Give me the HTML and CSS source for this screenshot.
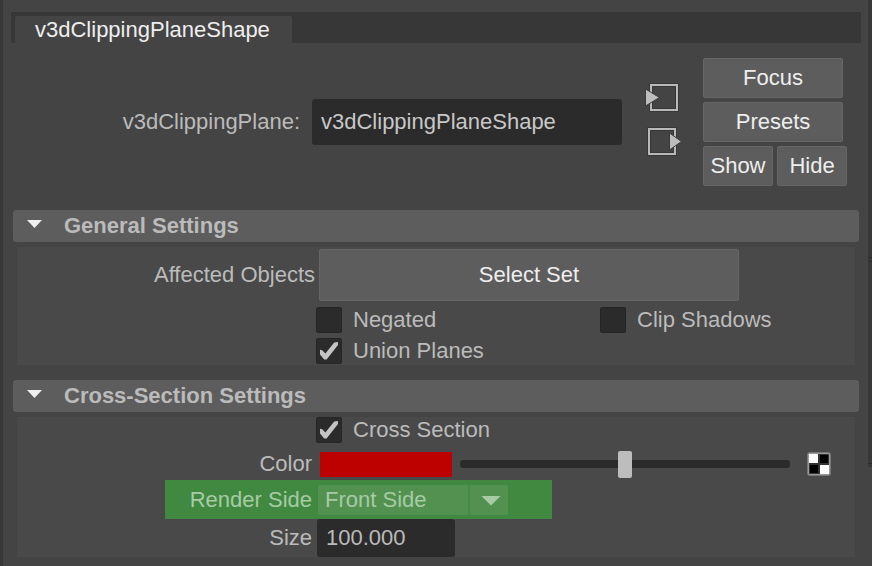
FILE: index.html
```html
<!DOCTYPE html>
<html lang="en">
<head>
<meta charset="utf-8">
<title>Attribute Editor</title>
<link rel="stylesheet" href="styles.css">
</head>
<body>
<div class="window">
  <main class="editor">
    <div class="tabs" role="tablist">
      <button class="tab" type="button" role="tab" aria-selected="true">v3dClippingPlaneShape</button>
    </div>

    <header class="node">
      <label class="node-label" for="node-name">v3dClippingPlane:</label>
      <input class="node-name" id="node-name" type="text" value="v3dClippingPlaneShape">
      <div class="ports">
        <button class="port" type="button" aria-label="Input connection">
          <svg width="38" height="32" viewBox="0 0 38 32">
            <path d="M5.500 1.500H34.500V29.500H5.500Z M8.500 4.500H31.500V26.500H8.500Z" fill="none" stroke="#373737"/>
            <rect x="7" y="3" width="26" height="25" fill="none" stroke="#b9b9b9" stroke-width="2"/>
            <path d="M1.500 7L15.500 15.500L1.500 24Z" fill="#bdbdbd" stroke="#3a3a3a"/>
          </svg>
        </button>
        <button class="port" type="button" aria-label="Output connection">
          <svg width="38" height="32" viewBox="0 0 38 32">
            <path d="M3.500 1.500H32.500V29.500H3.500Z M6.500 4.500H29.500V26.500H6.500Z" fill="none" stroke="#373737"/>
            <rect x="5" y="3" width="26" height="25" fill="none" stroke="#b9b9b9" stroke-width="2"/>
            <path d="M25.500 7L37.500 15.500L25.500 24Z" fill="#bdbdbd" stroke="#3a3a3a"/>
          </svg>
        </button>
      </div>
      <div class="actions">
        <button class="button" type="button">Focus</button>
        <button class="button" type="button">Presets</button>
        <div class="pair">
          <button class="button" type="button">Show</button>
          <button class="button" type="button">Hide</button>
        </div>
      </div>
    </header>

    <section class="section">
      <h2 class="section-title"><button class="section-toggle" type="button" aria-expanded="true">General Settings</button></h2>
      <div class="panel general">
        <div class="row">
          <span class="label wide-label" id="affected">Affected Objects</span>
          <button class="button set-button" type="button" aria-describedby="affected">Select Set</button>
        </div>
        <div class="checks">
          <label class="check"><input type="checkbox">Negated</label>
          <label class="check"><input type="checkbox">Clip Shadows</label>
          <label class="check"><input type="checkbox" checked>Union Planes</label>
        </div>
      </div>
    </section>

    <section class="section">
      <h2 class="section-title"><button class="section-toggle" type="button" aria-expanded="true">Cross-Section Settings</button></h2>
      <div class="panel">
        <div class="checks">
          <label class="check"><input type="checkbox" checked>Cross Section</label>
        </div>
        <div class="row color-row">
          <label class="label" for="brightness">Color</label>
          <button class="swatch" type="button" aria-label="Pick color"></button>
          <input class="slider" id="brightness" type="range" min="0" max="100" value="50">
          <button class="map" type="button" aria-label="Connect texture">
            <svg width="26" height="26" viewBox="0 0 26 26">
              <rect x="1" y="1" width="24" height="24" rx="3" fill="#777"/>
              <rect x="2" y="2" width="22" height="22" rx="2" fill="#999"/>
              <rect x="3" y="3" width="20" height="20" rx="1" fill="#333"/>
              <path d="M3 3h9v9H3zM14 14h9v9h-9z" fill="#fff"/>
              <path d="M14 4h8v8h-8zM4 14h8v8H4z" fill="#000"/>
            </svg>
          </button>
        </div>
        <div class="row side-row">
          <label class="label" for="render-side">Render Side</label>
          <span class="side-field">
            <select class="side" id="render-side"><option>Front Side</option><option>Back Side</option><option>Double Side</option></select>
          </span>
        </div>
        <div class="row">
          <label class="label" for="size">Size</label>
          <input class="size" id="size" type="text" value="100.000">
        </div>
      </div>
    </section>
  </main>
  <div class="edge"></div>
</div>
</body>
</html>
```
FILE: styles.css
```css
* {
  box-sizing: border-box;
}

body {
  margin: 0;
  background: #444;
  color: #bbb;
  font: 22px/26px "Liberation Sans", Arial, sans-serif;
}

button,
input,
select {
  margin: 0;
  padding: 0;
  border: 0;
  color: inherit;
  font: inherit;
}

.window {
  display: flex;
  min-height: 100vh;
  border-left: 3px solid #383838;
}

.editor {
  flex: 1;
  min-width: 0;
  padding: 12px 9px 9px 10px;
}

.edge {
  width: 4px;
  height: 467px;
  background: linear-gradient(#383838 257px, #2b2b2b 257px 258px, #383838 258px 261px, #2b2b2b 261px 262px, #383838 262px 463px, #2b2b2b 463px 464px, #383838 464px);
}

/* Node header */

.tabs {
  display: flex;
  margin: 0 -2px;
  padding: 4px 4px 0;
  background: #373737;
}

.tab {
  height: 27px;
  padding: 0 22px 0 20px;
  border-radius: 2px 2px 0 0;
  background: #444;
  color: #eee;
}

.node {
  display: flex;
  align-items: center;
  padding: 15px 12px 24px 0;
}

.node-label {
  width: 287px;
  text-align: right;
}

.node-name {
  flex: 1;
  min-width: 0;
  height: 46px;
  margin-left: 12px;
  padding: 0 9px;
  border-radius: 3px;
  background: #2b2b2b;
  color: #c8c8c8;
}

.ports {
  display: grid;
  gap: 12px;
  margin: 0 20px 4px 22px;
}

.port {
  display: block;
  width: 39px;
  height: 32px;
  background: none;
}

.port svg,
.map svg {
  display: block;
}

.actions {
  display: grid;
  gap: 4px;
  width: 144px;
}

.actions > .button {
  width: 140px;
}

.pair {
  display: flex;
  gap: 4px;
}

.pair .button {
  flex: 1;
}

.button {
  height: 40px;
  border: 1px solid #666;
  border-radius: 2px;
  background: #5d5d5d;
  color: #eee;
}

/* Collapsible sections */

.section + .section {
  margin-top: 15px;
}

.section-title {
  margin: 0 0 5px;
  font: inherit;
}

.section-toggle {
  display: flex;
  align-items: center;
  gap: 22px;
  width: 100%;
  height: 32px;
  padding: 0 14px;
  border-radius: 3px;
  background: #5d5d5d;
  font-weight: bold;
}

.section-toggle::before {
  content: "";
  width: 15px;
  height: 8px;
  margin-bottom: 4px;
  background: #eee;
  clip-path: polygon(0 0, 100% 0, 50% 100%);
}

.panel {
  margin: 0 4px;
  background: #494949;
}

.general {
  padding: 2px 0 1px;
}

.row {
  display: flex;
  align-items: center;
}

.label {
  flex: none;
  width: 295px;
  margin-right: 5px;
  text-align: right;
}

.wide-label {
  width: 298px;
  margin-right: 4px;
}

.set-button {
  flex: 0 1 420px;
  height: 52px;
}

.checks {
  display: grid;
  grid-template-columns: 284px 1fr;
  gap: 5px 0;
  margin-left: 299px;
}

.general .checks {
  margin-top: 6px;
}

.check {
  display: flex;
  align-items: center;
  gap: 11px;
}

.check:nth-child(3) {
  grid-column: 1;
}

.check input {
  appearance: none;
  width: 26px;
  height: 26px;
  border: 1px solid #262626;
  border-radius: 2px;
  background: #2b2b2b;
}

.check input:checked::before {
  content: "";
  display: block;
  width: 20px;
  height: 20px;
  margin: 2px;
  background: #c4c4c4;
  clip-path: polygon(5% 44%, 16% 46%, 32% 62%, 76% 8%, 95% 5%, 95% 20%, 38% 92%, 26% 92%, 5% 68%);
}

/* Cross-section fields */

.color-row {
  height: 37px;
  padding: 5px 23px 0 0;
}

.swatch {
  flex: none;
  width: 132px;
  height: 25px;
  margin: 0 8px 0 3px;
  background: #bd0000;
}

.slider {
  appearance: none;
  flex: 1;
  min-width: 0;
  height: 27px;
  margin-right: 16px;
  background: none;
}

.slider::-webkit-slider-runnable-track {
  height: 8px;
  border-radius: 3px;
  background: #2b2b2b;
}

.slider::-webkit-slider-thumb {
  appearance: none;
  width: 14px;
  height: 27px;
  margin-top: -9px;
  border-radius: 2px;
  background: #bdbdbd;
}

.map {
  width: 26px;
  height: 26px;
  background: none;
}

.side-row {
  width: 387px;
  height: 39px;
  margin-left: 148px;
  background: #418940;
  color: #a6cba5;
}

.side-row .label {
  width: 147px;
  margin-right: 6px;
}

.side-field {
  position: relative;
  width: 190px;
}

.side {
  appearance: none;
  display: block;
  width: 100%;
  height: 30px;
  padding: 0 7px;
  border-radius: 2px;
  background: linear-gradient(to right, #529150 150px, #478b46 150px 152px, #529150 152px);
}

.side-field::after {
  content: "";
  position: absolute;
  top: 11px;
  right: 7px;
  width: 20px;
  height: 10px;
  background: #a6cba5;
  clip-path: polygon(0 0, 100% 0, 50% 100%);
  pointer-events: none;
}

.size {
  width: 138px;
  height: 38px;
  padding: 0 9px;
  border-radius: 3px;
  background: #2b2b2b;
}
```
